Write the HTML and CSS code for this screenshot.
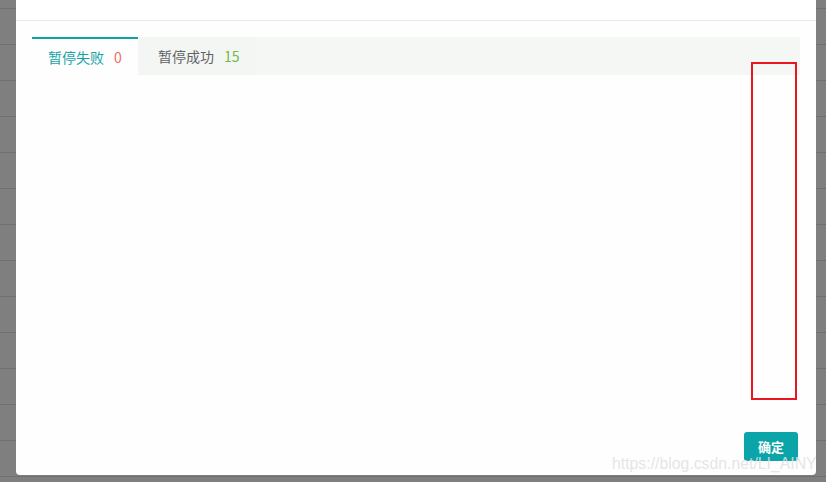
FILE: index.html
```html
<!DOCTYPE html>
<html lang="zh">
<head>
<meta charset="utf-8">
<title>暂停结果</title>
<link rel="stylesheet" href="styles.css">
</head>
<body>
<div class="backdrop">
  <div class="dialog">
    <div class="dialog-header"></div>
    <div class="dialog-body">
      <div class="tabs">
        <div class="tab tab-active">暂停失败<span class="num num-fail">0</span></div>
        <div class="tab tab-second">暂停成功<span class="num num-ok">15</span></div>
      </div>
    </div>
    <div class="dialog-footer">
      <button class="btn-primary">确定</button>
    </div>
  </div>
  <div class="annotation"></div>
  <div class="watermark">https://blog.csdn.net/LI_AINY</div>
</div>
</body>
</html>
```

FILE: styles.css
```css
html, body {
  margin: 0;
  padding: 0;
}
body {
  width: 826px;
  height: 482px;
  overflow: hidden;
  font-family: "Noto Sans CJK SC", "Noto Sans", sans-serif;
}
.backdrop {
  position: relative;
  width: 826px;
  height: 482px;
  background-color: #7f7f7f;
  background-image: repeating-linear-gradient(to bottom, transparent 0px, transparent 8px, #6f6f6f 8px, #6f6f6f 9px, transparent 9px, transparent 36px);
  padding-left: 16px;
  box-sizing: border-box;
}
.dialog {
  width: 800px;
  height: 475px;
  background: #fefefe;
  border-radius: 0 0 4px 4px;
  display: flex;
  flex-direction: column;
}
.dialog-header {
  height: 20px;
  border-bottom: 1px solid #e9e9e9;
  background: #ffffff;
}
.dialog-body {
  flex: 1;
  padding: 16px 16px 0 16px;
}
.tabs {
  display: flex;
  height: 38px;
  background: #f5f7f5;
}
.tab {
  display: flex;
  align-items: center;
  font-size: 14px;
  color: #5f6266;
  box-sizing: border-box;
  height: 38px;
}
.tab-active {
  width: 106px;
  padding-left: 16px;
  background: #fefefe;
  border-top: 2px solid #0aa4a9;
  color: #14a3a8;
}
.tab-second {
  width: 117px;
  padding-left: 20px;
  background: #f4f6f4;
}
.num {
  margin-left: 10px;
  font-size: 14px;
}
.num-fail {
  color: #f06c6c;
}
.num-ok {
  color: #6fba4a;
}
.dialog-footer {
  display: flex;
  justify-content: flex-end;
  padding: 0 18px 14px 0;
}
.btn-primary {
  width: 54px;
  height: 29px;
  border: none;
  border-radius: 3px;
  background: #0aa4a9;
  color: #ffffff;
  font-family: "Noto Sans CJK SC", sans-serif;
  font-size: 13px;
  font-weight: bold;
  padding: 0;
}
.annotation {
  position: absolute;
  left: 751px;
  top: 62px;
  width: 46px;
  height: 338px;
  box-sizing: border-box;
  border: 2px solid #ea1520;
}
.watermark {
  position: absolute;
  left: 612px;
  top: 455px;
  font-family: "Liberation Sans", Arial, sans-serif;
  font-size: 15.8px;
  color: rgba(225, 225, 225, 0.85);
  white-space: nowrap;
}
```
